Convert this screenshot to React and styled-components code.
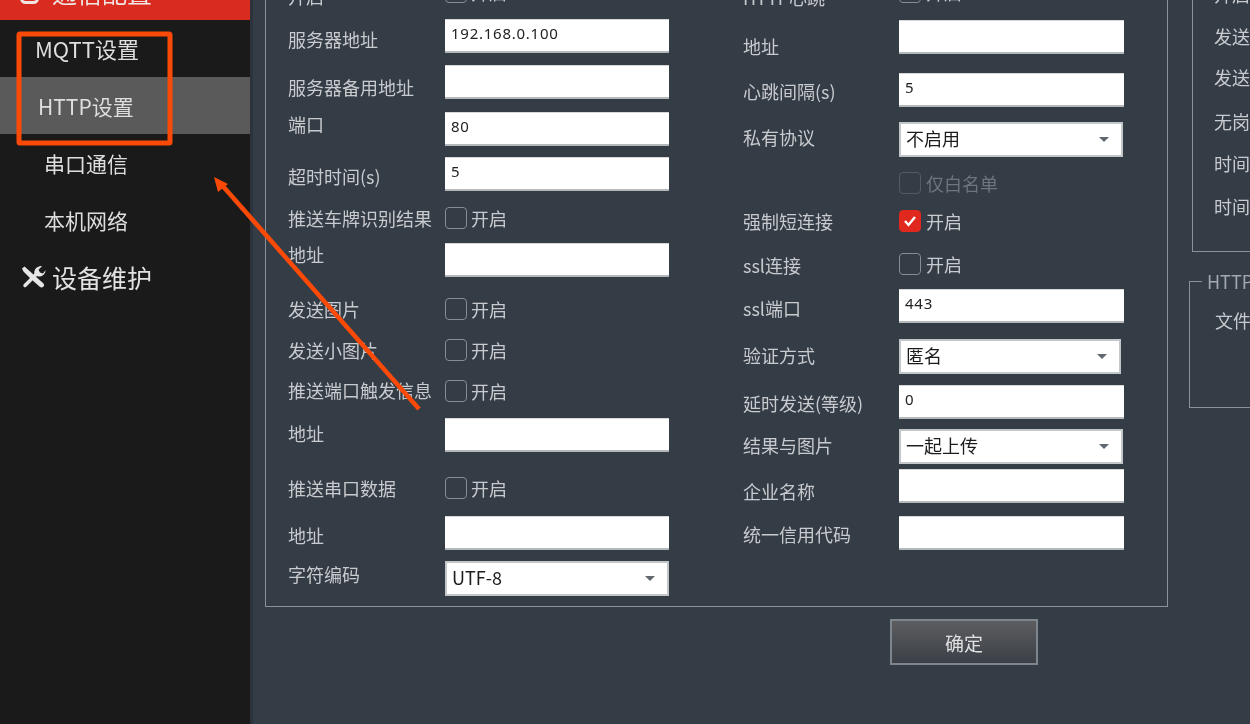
import React from 'react';
import styled, { createGlobalStyle } from 'styled-components';

// styles
const GlobalStyle = createGlobalStyle`
    html, body {
        margin: 0;
        padding: 0;
        height: 100%;
        background: #343c46;
    }
    * {
        box-sizing: border-box;
    }
`;

const Page = styled.div`
    position: relative;
    display: flex;
    width: 1250px;
    height: 724px;
    overflow: hidden;
    background: #343c46;
    font-family: "Noto Sans CJK SC", "Noto Sans", sans-serif;
`;

const Screen = styled.div`
    display: flex;
    width: 100%;
    height: 100%;
    filter: blur(0.35px);
`;

const Sidebar = styled.aside`
    flex: none;
    width: 250px;
    background: #1a1a1a;
    box-shadow: 3px 0 0 #2c333c;
`;

const NavHeader = styled.div`
    display: flex;
    align-items: center;
    height: 57px;
    margin-top: -37px;
    padding-left: 20px;
    gap: 13px;
    background: #d92b1f;
    color: #f0e6e4;
    font-size: 25px;
`;

const NavGroup = styled(NavHeader)`
    margin-top: 0;
    padding-left: 21px;
    gap: 6px;
    background: transparent;
    color: #e2e2e2;
`;

const NavItem = styled.div`
    display: flex;
    align-items: center;
    height: 57px;
    padding-left: ${p => p.$indent}px;
    padding-bottom: ${p => (p.$raised ? 2 : 0)}px;
    background: ${p => (p.$active ? '#5a5a5a' : 'transparent')};
    color: #dedede;
    font-size: ${p => p.$size}px;
`;

const Main = styled.main`
    flex: none;
    display: flex;
    flex-direction: column;
    width: 917px;
    margin-left: 15px;
    margin-top: -40px;
`;

const Content = styled.div`
    display: flex;
    flex: none;
`;

const FormPanel = styled.section`
    flex: none;
    display: flex;
    gap: 74px;
    width: 903px;
    height: 647px;
    padding: 20px 0 0 22px;
    border: 1px solid #8b9299;
`;

const Column = styled.div`
    display: flex;
    flex-direction: column;
    width: 381px;
`;

const Row = styled.div`
    display: flex;
    flex: none;
    height: ${p => p.$h}px;
    margin-top: ${p => p.$gap}px;
`;

const Label = styled.div`
    flex: none;
    width: ${p => p.$width}px;
    margin-top: ${p => p.$dy - 1}px;
    line-height: ${p => p.$h}px;
    font-size: 18px;
    white-space: nowrap;
    color: #c8cbce;
`;

const TextInput = styled.input`
    width: ${p => p.$width}px;
    height: 100%;
    padding: 0 6px 5px;
    border: 0;
    border-top: 1px solid #d8d8d8;
    border-bottom: 2px solid #b5b8bb;
    border-radius: 0;
    outline: 0;
    background: #fff;
    color: #222;
    font-family: "Noto Sans", sans-serif;
    font-size: 15px;
    letter-spacing: 0.75px;
`;

const Select = styled.div`
    display: flex;
    align-items: center;
    justify-content: space-between;
    width: ${p => p.$width}px;
    height: 100%;
    padding: 0 12px 4px 5px;
    border: 2px solid #c4c7ca;
    background: #fff;
    color: #1c1c1c;
    font-size: 18px;
`;

const Caret = styled.span`
    width: 0;
    height: 0;
    margin-top: 4px;
    border-left: 5px solid transparent;
    border-right: 5px solid transparent;
    border-top: 5px solid #62686f;
`;

const CheckLine = styled.div`
    display: flex;
    align-items: center;
    gap: ${p => p.$gap}px;
    font-size: 18px;
    line-height: 22px;
    color: ${p => (p.$disabled ? '#6f757c' : '#c8cbce')};
`;

const CheckBox = styled.span`
    flex: none;
    display: flex;
    align-items: center;
    justify-content: center;
    width: 22px;
    height: 22px;
    border: 1px solid ${p => (p.$disabled ? '#535a63' : '#868d94')};
    border-radius: 4px;
    background: ${p => (p.$checked ? '#e0281f' : 'transparent')};
    ${p => p.$checked && 'border-color: #e0281f;'}
`;

const SideColumn = styled.div`
    flex: none;
    display: flex;
    flex-direction: column;
    margin-left: 24px;
`;

const SideBox = styled.div`
    width: 200px;
    height: 292px;
    border: 1px solid #8b9299;
    padding-left: 21px;
`;

const SideLabel = styled.div`
    height: 26px;
    margin-top: ${p => p.$gap}px;
    line-height: 26px;
    font-size: 18px;
    color: #c8cbce;
`;

const Fieldset = styled.fieldset`
    width: 200px;
    height: 137px;
    margin: 19px 0 0 -3px;
    padding: 0;
    border: 1px solid #8b9299;
`;

const Legend = styled.legend`
    margin-left: 12px;
    padding: 0 5px;
    font-size: 18px;
    line-height: 20px;
    color: #a2a8ae;
`;

const FileLabel = styled.div`
    margin: 16px 0 0 25px;
    font-size: 18px;
    line-height: 26px;
    color: #c8cbce;
`;

const Submit = styled.button`
    flex: none;
    width: 148px;
    height: 46px;
    margin: 12px 0 0 625px;
    border: 2px solid #7e858c;
    border-radius: 0;
    background: linear-gradient(#5c5d60, #3b4047);
    color: #e0e0e0;
    font-family: inherit;
    font-size: 19px;
`;

const Annotation = styled.svg`
    position: absolute;
    left: 0;
    top: 0;
    width: 1250px;
    height: 724px;
    pointer-events: none;
`;

// page data
const leftRows = [
    { label: '开启', kind: 'check', gap: 0, dy: 5 },
    { label: '服务器地址', kind: 'input', value: '192.168.0.100', gap: 16, dy: 4 },
    { label: '服务器备用地址', kind: 'input', gap: 12, dy: 6 },
    { label: '端口', kind: 'input', value: '80', gap: 13, dy: -4 },
    { label: '超时时间(s)', kind: 'input', value: '5', gap: 11, dy: 3 },
    { label: '推送车牌识别结果', kind: 'check', gap: 16, dy: 1 },
    { label: '地址', kind: 'input', gap: 14, dy: -5 },
    { label: '发送图片', kind: 'check', gap: 21, dy: 1 },
    { label: '发送小图片', kind: 'check', gap: 19, dy: 1 },
    { label: '推送端口触发信息', kind: 'check', gap: 19, dy: 0 },
    { label: '地址', kind: 'input', gap: 16, dy: -1 },
    { label: '推送串口数据', kind: 'check', gap: 25, dy: 1 },
    { label: '地址', kind: 'input', gap: 17, dy: 3 },
    { label: '字符编码', kind: 'select', value: 'UTF-8', gap: 11, dy: -3, width: 224 },
];

const rightRows = [
    { label: 'HTTP心跳', kind: 'check', gap: 0, dy: 6 },
    { label: '地址', kind: 'input', gap: 17, dy: 10 },
    { label: '心跳间隔(s)', kind: 'input', value: '5', gap: 19, dy: 2 },
    { label: '私有协议', kind: 'select', value: '不启用', gap: 15, dy: -1, width: 224 },
    { label: '', kind: 'check', text: '仅白名单', disabled: true, gap: 15, dy: 0 },
    { label: '强制短连接', kind: 'check', checked: true, gap: 16, dy: 1 },
    { label: 'ssl连接', kind: 'check', gap: 21, dy: 2 },
    { label: 'ssl端口', kind: 'input', value: '443', gap: 14, dy: 3 },
    { label: '验证方式', kind: 'select', value: '匿名', gap: 16, dy: 0, width: 222 },
    { label: '延时发送(等级)', kind: 'input', value: '0', gap: 11, dy: 2 },
    { label: '结果与图片', kind: 'select', value: '一起上传', gap: 10, dy: 0, width: 224 },
    { label: '企业名称', kind: 'input', gap: 5, dy: 6 },
    { label: '统一信用代码', kind: 'input', gap: 13, dy: 2 },
];

const sideLabels = [
    { text: '开启', gap: 20 },
    { text: '发送图片', gap: 16 },
    { text: '发送小图片', gap: 15 },
    { text: '无岗亭模式', gap: 18 },
    { text: '时间同步', gap: 16 },
    { text: '时间间隔', gap: 17 },
];

const heights = { check: 22, input: 34, select: 35 };

const FormRow = ({ row, labelWidth, inputWidth, checkGap }) => {
    const h = heights[row.kind];
    return (
        <Row $h={h} $gap={row.gap}>
            <Label $h={h} $dy={row.dy} $width={labelWidth}>{row.label}</Label>
            {row.kind === 'input' && <TextInput $width={inputWidth} defaultValue={row.value || ''} readOnly />}
            {row.kind === 'select' && (
                <Select $width={row.width}>
                    {row.value}
                    <Caret />
                </Select>
            )}
            {row.kind === 'check' && (
                <CheckLine $disabled={row.disabled} $gap={checkGap}>
                    <CheckBox $checked={row.checked} $disabled={row.disabled}>
                        {row.checked && (
                            <svg width="14" height="12" viewBox="0 0 14 12">
                                <path d="M2 6l3.5 4L12 2" fill="none" stroke="#fff" strokeWidth="2.4" />
                            </svg>
                        )}
                    </CheckBox>
                    {row.text || '开启'}
                </CheckLine>
            )}
        </Row>
    );
};

const ToolsIcon = () => (
    <svg width="25" height="24" viewBox="0 0 25 24" fill="#e6e6e6">
        <path d="M1 3.5L3.5 1.5l9.5 8.5 9 8q2 2 .5 3.5-2 2-4 0L10 14 2.5 6.5z" />
        <path d="M4 20.5L15 9.5" fill="none" stroke="#e6e6e6" strokeWidth="3.5" strokeLinecap="round" />
        <path d="M13.5 9A6.5 6.5 0 0 1 21 1.2L17.5 4.8 19 7.5l3 1 2.6-3.5A6.5 6.5 0 0 1 17 11.5z" />
    </svg>
);

const App = () => (
    <Page>
        <GlobalStyle />
        <Screen>
            <Sidebar>
                <NavHeader>
                    <svg width="19" height="24" viewBox="0 0 19 24">
                        <rect x="1.5" y="1.5" width="16" height="21" rx="4" fill="none" stroke="#f0e6e4" strokeWidth="3" />
                    </svg>
                    通信配置
                </NavHeader>
                <NavItem $indent={35} $size={22} $raised>MQTT设置</NavItem>
                <NavItem $indent={38} $size={21} $active>HTTP设置</NavItem>
                <NavItem $indent={44} $size={21}>串口通信</NavItem>
                <NavItem $indent={44} $size={21}>本机网络</NavItem>
                <NavGroup>
                    <ToolsIcon />
                    设备维护
                </NavGroup>
            </Sidebar>

            <Main>
                <Content>
                    <FormPanel>
                        <Column>
                            {leftRows.map((row, index) => <FormRow key={index} row={row} labelWidth={157} inputWidth={224} checkGap={4} />)}
                        </Column>
                        <Column>
                            {rightRows.map((row, index) => <FormRow key={index} row={row} labelWidth={156} inputWidth={225} checkGap={5} />)}
                        </Column>
                    </FormPanel>

                    <SideColumn>
                        <SideBox>
                            {sideLabels.map(item => <SideLabel key={item.text} $gap={item.gap}>{item.text}</SideLabel>)}
                        </SideBox>
                        <Fieldset>
                            <Legend>HTTP上传</Legend>
                            <FileLabel>文件上传</FileLabel>
                        </Fieldset>
                    </SideColumn>
                </Content>

                <Submit>确定</Submit>
            </Main>
        </Screen>

        <Annotation viewBox="0 0 1250 724">
            <rect x="19" y="34" width="151" height="109" rx="1" fill="none" stroke="#fb4a08" strokeWidth="5" />
            <path d="M419 409L221 184" stroke="#fb4a08" strokeWidth="4.5" fill="none" />
            <path d="M214 177L228 184L218 192Z" fill="#fb4a08" />
        </Annotation>
    </Page>
);

export default App;
